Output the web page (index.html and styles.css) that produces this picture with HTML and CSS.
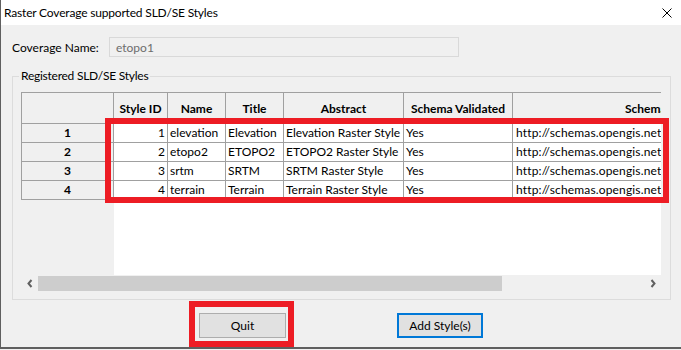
FILE: index.html
```html
<!DOCTYPE html>
<html lang="en">
<head>
  <meta charset="UTF-8">
  <title>Raster Coverage supported SLD/SE Styles</title>
  <link rel="stylesheet" href="styles.css">
</head>
<body>
  <div class="window">
    <div class="titlebar">
      <span class="title">Raster Coverage supported SLD/SE Styles</span>
      <svg class="close" width="10" height="10" viewBox="0 0 10 10">
        <path d="M0.5 0.5 L9.5 9.5 M9.5 0.5 L0.5 9.5" stroke="#000" stroke-width="1" fill="none"/>
      </svg>
    </div>

    <div class="content">
      <div class="name-row">
        <label class="name-label">Coverage Name:</label>
        <input class="name-input" type="text" value="etopo1" disabled>
      </div>

      <fieldset class="group">
        <legend>Registered SLD/SE Styles</legend>
        <div class="grid">
          <div class="grid-view">
            <table class="styles-table">
              <colgroup>
                <col style="width: 92px">
                <col style="width: 54px">
                <col style="width: 58px">
                <col style="width: 58px">
                <col style="width: 120px">
                <col style="width: 109px">
                <col style="width: 290px">
              </colgroup>
              <thead>
                <tr>
                  <th></th>
                  <th>Style ID</th>
                  <th>Name</th>
                  <th>Title</th>
                  <th>Abstract</th>
                  <th>Schema Validated</th>
                  <th class="uri-head">Schema URI</th>
                </tr>
              </thead>
              <tbody>
                <tr>
                  <th>1</th>
                  <td class="num">1</td>
                  <td>elevation</td>
                  <td>Elevation</td>
                  <td>Elevation Raster Style</td>
                  <td>Yes</td>
                  <td class="uri">http://schemas.opengis.net</td>
                </tr>
                <tr>
                  <th>2</th>
                  <td class="num">2</td>
                  <td>etopo2</td>
                  <td>ETOPO2</td>
                  <td>ETOPO2 Raster Style</td>
                  <td>Yes</td>
                  <td class="uri">http://schemas.opengis.net</td>
                </tr>
                <tr>
                  <th>3</th>
                  <td class="num">3</td>
                  <td>srtm</td>
                  <td>SRTM</td>
                  <td>SRTM Raster Style</td>
                  <td>Yes</td>
                  <td class="uri">http://schemas.opengis.net</td>
                </tr>
                <tr>
                  <th>4</th>
                  <td class="num">4</td>
                  <td>terrain</td>
                  <td>Terrain</td>
                  <td>Terrain Raster Style</td>
                  <td>Yes</td>
                  <td class="uri">http://schemas.opengis.net</td>
                </tr>
              </tbody>
            </table>
          </div>
          <div class="hscroll">
            <span class="scroll-btn">
              <svg width="6" height="9" viewBox="0 0 6 9"><path d="M4.5 1 L1.5 4.5 L4.5 8" stroke="#606060" stroke-width="2" fill="none"/></svg>
            </span>
            <span class="thumb"></span>
            <span class="scroll-fill"></span>
            <span class="scroll-btn">
              <svg width="6" height="9" viewBox="0 0 6 9"><path d="M1.5 1 L4.5 4.5 L1.5 8" stroke="#606060" stroke-width="2" fill="none"/></svg>
            </span>
          </div>
        </div>
      </fieldset>

      <div class="buttons">
        <button class="btn quit-btn">Quit</button>
        <button class="btn add-btn">Add Style(s)</button>
      </div>
    </div>

    <!-- red annotation frames drawn over the dialog -->
    <div class="mark mark-rows"></div>
    <div class="mark mark-quit"></div>
  </div>
</body>
</html>
```

FILE: styles.css
```css
body {
  margin: 0;
  background: #f0f0f0;
  font-family: Lato, "Liberation Sans", sans-serif;
  font-size: 12px;
  color: #000;
}
.window {
  position: relative;
  width: 681px;
  height: 349px;
  box-sizing: border-box;
  border-left: 1px solid #5f5f5f;
  border-bottom: 2px solid #5f5f5f;
  background: #f0f0f0;
  overflow: hidden;
}
.titlebar {
  display: flex;
  align-items: center;
  height: 25px;
  padding-left: 3px;
  background: #fff;
}
.title {
  letter-spacing: -0.18px;
}
.close {
  margin-left: auto;
  margin-right: 9px;
}
.content {
  padding: 12px 0 0 11px;
}
.name-row {
  display: flex;
  align-items: center;
  height: 20px;
}
.name-label {
  width: 97px;
}
.name-input {
  width: 350px;
  height: 20px;
  box-sizing: border-box;
  margin: 0;
  padding: 0 6px;
  border: 1px solid #d9d9d9;
  background: #f0f0f0;
  color: #6d6d6d;
  font: inherit;
}
.group {
  width: 659px;
  box-sizing: border-box;
  margin: 12px 0 0 0;
  padding: 0 9px 7px 8px;
  border: 1px solid #dcdcdc;
}
.group legend {
  padding: 0 2px;
  margin-left: -2px;
  line-height: 14px;
  letter-spacing: -0.25px;
}
.grid {
  margin-top: 9px;
  width: 640px;
}
.grid-view {
  height: 183px;
  overflow: hidden;
  background: linear-gradient(to right, #f0f0f0 93px, #fff 93px);
}
.styles-table {
  table-layout: fixed;
  width: 782px;
  border-collapse: separate;
  border-spacing: 0;
  border-top: 1px solid #a0a0a0;
  border-left: 1px solid #a0a0a0;
}
.styles-table th,
.styles-table td {
  border-right: 1px solid #a0a0a0;
  border-bottom: 1px solid #a0a0a0;
  white-space: nowrap;
  overflow: hidden;
  padding: 0 2px;
}
.styles-table th {
  background: #f0f0f0;
  font-weight: bold;
  text-align: center;
}
.styles-table thead th {
  height: 31px;
  box-sizing: border-box;
}
.styles-table thead th.uri-head {
  text-align: left;
  padding-left: 112px;
}
.styles-table tbody th,
.styles-table td {
  height: 19px;
  box-sizing: border-box;
  line-height: 18px;
}
.styles-table td {
  background: #fff;
  text-align: left;
}
.styles-table td.num {
  text-align: right;
}
.styles-table td.uri {
  padding-left: 3px;
  letter-spacing: 0.15px;
}
.hscroll {
  display: flex;
  height: 17px;
  background: #f0f0f0;
}
.scroll-btn {
  width: 17px;
  display: flex;
  align-items: center;
  justify-content: center;
}
.thumb {
  width: 464px;
  margin: 1px 0;
  background: #cdcdcd;
}
.scroll-fill {
  flex: 1;
}
.buttons {
  display: flex;
  margin-top: 13px;
}
.btn {
  height: 25px;
  margin: 0;
  padding: 0;
  background: #e1e1e1;
  font: inherit;
  color: #000;
  box-sizing: border-box;
}
.quit-btn {
  width: 87px;
  margin-left: 187px;
  border: 1px solid #adadad;
}
.add-btn {
  width: 86px;
  margin-left: 111px;
  border: 2px solid #0078d7;
}
.mark {
  position: absolute;
  box-sizing: border-box;
  border: 6px solid #ed1c24;
}
.mark-rows {
  left: 104px;
  top: 118px;
  width: 564px;
  height: 85px;
}
.mark-quit {
  left: 188px;
  top: 301px;
  width: 105px;
  height: 46px;
}
```
